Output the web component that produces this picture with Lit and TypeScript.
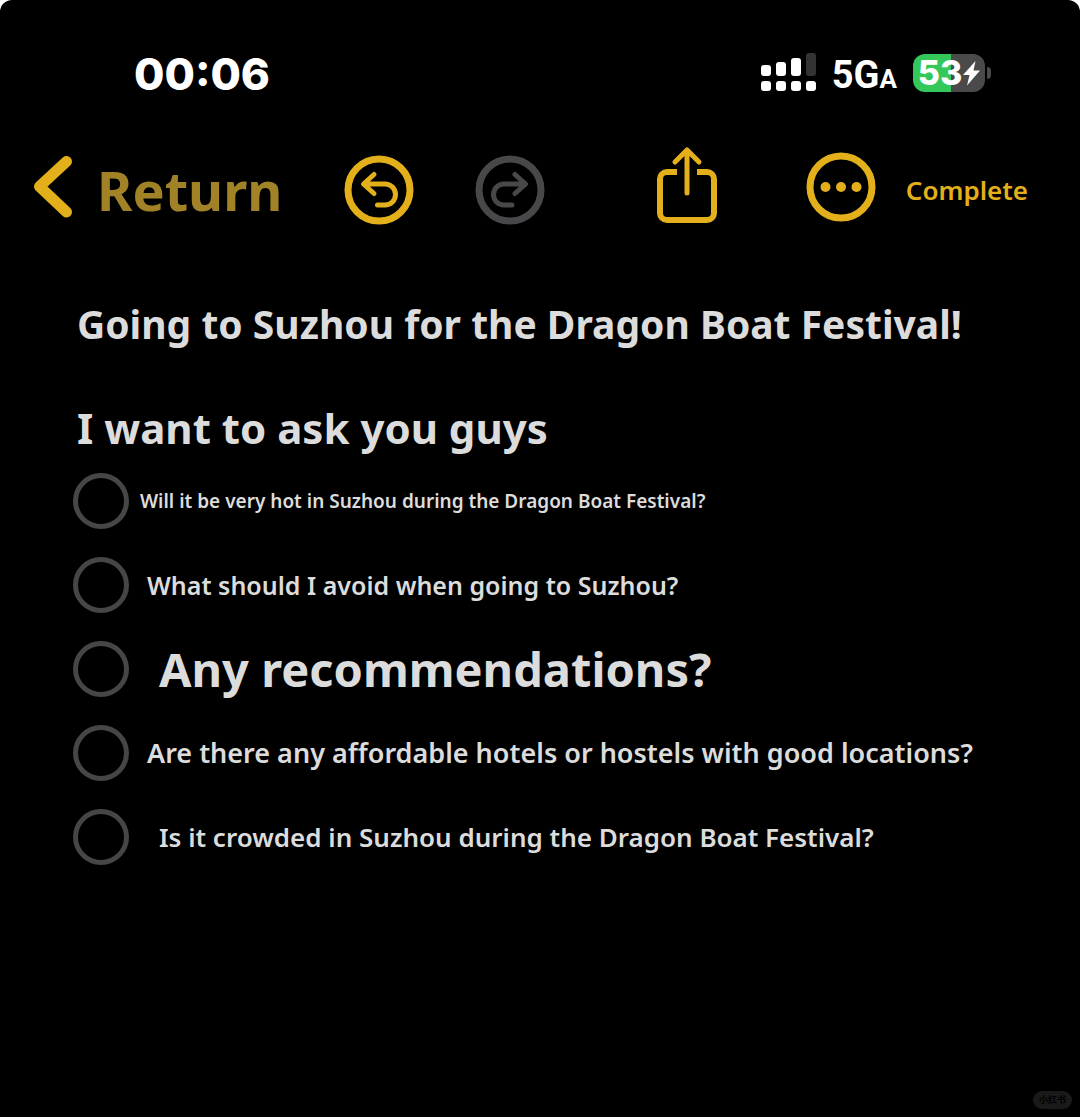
import { LitElement, html, css, svg } from "lit";
import { customElement, property } from "lit/decorators.js";
import { classMap } from "lit/directives/class-map.js";

interface Item {
  text: string;
  size: "xs" | "sm" | "md" | "ml" | "lg";
  inset: "near" | "mid" | "far";
}

const items: Item[] = [
  { text: "Will it be very hot in Suzhou during the Dragon Boat Festival?", size: "xs", inset: "near" },
  { text: "What should I avoid when going to Suzhou?", size: "sm", inset: "mid" },
  { text: "Any recommendations?", size: "lg", inset: "far" },
  { text: "Are there any affordable hotels or hostels with good locations?", size: "ml", inset: "mid" },
  { text: "Is it crowded in Suzhou during the Dragon Boat Festival?", size: "md", inset: "far" },
];

@customElement("status-bar")
export class StatusBar extends LitElement {
  static styles = css`
    :host {
      display: flex;
      align-items: center;
      justify-content: space-between;
      height: 48px;
      padding: 49px 89px 0 134px;
      color: #fff;
      font-family: Inter, "Liberation Sans", sans-serif;
    }
    .time {
      padding-top: 2px;
      font-size: 44px;
      line-height: 48px;
      font-weight: 800;
    }
    .indicators {
      display: flex;
      align-items: center;
    }
    .signal {
      display: block;
      width: 56px;
      height: 40px;
      margin-right: 16px;
    }
    .network {
      padding-top: 8px;
      font-family: Roboto, "Liberation Sans", sans-serif;
      font-size: 38px;
      line-height: 40px;
      font-weight: 700;
      margin-right: 16px;
    }
    .network small {
      font-size: 26px;
    }
    .battery {
      display: flex;
      align-items: center;
    }
    .cell {
      display: flex;
      align-items: center;
      justify-content: center;
      width: 72px;
      height: 38px;
      border-radius: 12px;
      background: linear-gradient(to right, #34c759 53%, #4a4a4a 53%);
      font-size: 34px;
      line-height: 38px;
      font-weight: 800;
    }
    .bolt {
      width: 18px;
      height: 26px;
    }
    .cap {
      width: 4px;
      height: 12px;
      margin-left: 2px;
      border-radius: 0 6px 6px 0;
      background: #4a4a4a;
    }
  `;

  render() {
    const bars = [0, 15, 30, 45];
    const heights = [11, 14, 18, 23];
    return html`
      <span class="time">00:06</span>
      <div class="indicators">
        <svg class="signal" viewBox="0 0 56 40" aria-hidden="true">
          ${bars.map(
            (x, i) => svg`
              <rect x=${x + 1} y=${23 - heights[i]} width="10" height=${heights[i]} rx="3" fill=${i === 3 ? "#333" : "#fff"}></rect>
              <rect x=${x + 1} y="28" width="10" height="10" rx="3" fill="#fff"></rect>`
          )}
        </svg>
        <span class="network">5G<small>A</small></span>
        <div class="battery">
          <span class="cell">53<svg class="bolt" viewBox="0 0 18 26" aria-hidden="true">
            <path d="M13.500 1 1 15h6.500L5 25.500 18 10.500h-6.500Z" fill="#fff"></path>
          </svg></span>
          <span class="cap"></span>
        </div>
      </div>
    `;
  }
}

@customElement("note-toolbar")
export class NoteToolbar extends LitElement {
  static styles = css`
    :host {
      display: flex;
      align-items: center;
      justify-content: space-between;
      height: 84px;
      padding: 51px 52px 0 32px;
      font-family: "Noto Sans", "Open Sans", sans-serif;
    }
    button {
      display: flex;
      align-items: center;
      padding: 0;
      border: 0;
      background: none;
      color: #e3b01b;
      font-family: inherit;
      font-weight: 600;
      cursor: pointer;
    }
    button:disabled {
      color: #48484a;
      cursor: default;
    }
    svg {
      display: block;
      fill: none;
      stroke: currentColor;
      stroke-linecap: round;
      stroke-linejoin: round;
    }
    .group {
      display: flex;
      align-items: center;
    }
    .back {
      gap: 23px;
      margin-right: 62px;
    }
    .back span {
      color: #a18227;
      font-size: 54px;
      line-height: 64px;
      font-weight: 700;
    }
    .undo {
      margin-right: 61px;
    }
    .share {
      margin-right: 88px;
      padding-bottom: 10px;
    }
    .more {
      margin-right: 30px;
      padding-bottom: 6px;
    }
    .done {
      font-size: 26px;
      line-height: 32px;
    }
  `;

  render() {
    return html`
      <div class="group">
        <button class="back">
          <svg width="42" height="72" viewBox="0 0 42 72" aria-hidden="true">
            <path d="M34.500 7.500 7.500 32.500 34.500 58" stroke-width="11"></path>
          </svg>
          <span>Return</span>
        </button>
        <button class="undo" aria-label="Undo">
          <svg width="70" height="70" viewBox="0 0 70 70" aria-hidden="true">
            <circle cx="35" cy="35" r="31" stroke-width="7"></circle>
            <path d="M30 19.500 19.500 29 30 38.500M20 29H41a10.500 10.500 0 0 1 0 21H33.500" stroke-width="5"></path>
          </svg>
        </button>
        <button class="redo" aria-label="Redo" disabled>
          <svg width="70" height="70" viewBox="0 0 70 70" aria-hidden="true">
            <circle cx="35" cy="35" r="31" stroke-width="7"></circle>
            <path d="M40 19.500 50.500 29 40 38.500M50 29H29a10.500 10.500 0 0 0 0 21H37" stroke-width="5"></path>
          </svg>
        </button>
      </div>
      <div class="group">
        <button class="share" aria-label="Share">
          <svg width="62" height="78" viewBox="0 0 62 78" aria-hidden="true">
            <path d="M21 26H11a7 7 0 0 0-7 7V67a7 7 0 0 0 7 7H51a7 7 0 0 0 7-7V33a7 7 0 0 0-7-7H41" stroke-width="6" stroke-linecap="butt"></path>
            <path d="M31 4V47M19 16 31 4 43 16" stroke-width="5"></path>
          </svg>
        </button>
        <button class="more" aria-label="More">
          <svg width="70" height="70" viewBox="0 0 70 70" aria-hidden="true">
            <circle cx="35" cy="35" r="31" stroke-width="7"></circle>
            <g fill="currentColor" stroke="none">
              <circle cx="19.500" cy="35" r="5"></circle>
              <circle cx="35" cy="35" r="5"></circle>
              <circle cx="50.500" cy="35" r="5"></circle>
            </g>
          </svg>
        </button>
        <button class="done">Complete</button>
      </div>
    `;
  }
}

@customElement("check-item")
export class CheckItem extends LitElement {
  @property({ attribute: false }) item!: Item;

  static styles = css`
    :host {
      display: block;
    }
    .row {
      display: flex;
      align-items: center;
      min-height: 56px;
      color: #dcdcdc;
      font-weight: 600;
      cursor: pointer;
    }
    .box {
      appearance: none;
      flex: none;
      width: 56px;
      height: 56px;
      margin: 0;
      border: 5px solid #464648;
      border-radius: 50%;
      cursor: pointer;
    }
    .box:checked {
      border-color: #e3b01b;
      background: radial-gradient(#e3b01b 60%, transparent 62%);
    }
    .near { gap: 11px; }
    .mid { gap: 18px; }
    .far { gap: 30px; }
    .xs { font-size: 19px; line-height: 24px; }
    .sm { font-size: 25px; line-height: 32px; }
    .md { font-size: 26px; line-height: 32px; }
    .ml { font-size: 27px; line-height: 32px; }
    .lg { font-size: 47px; line-height: 56px; font-weight: 700; }
  `;

  render() {
    const { text, size, inset } = this.item;
    return html`
      <label class=${classMap({ row: true, [size]: true, [inset]: true })}>
        <input class="box" type="checkbox" />
        <span>${text}</span>
      </label>
    `;
  }
}

@customElement("app-root")
export class AppRoot extends LitElement {
  static styles = css`
    :host {
      display: block;
      background: #fff;
      font-family: "Noto Sans", "Open Sans", sans-serif;
    }
    .screen {
      box-sizing: border-box;
      display: flex;
      flex-direction: column;
      min-height: 100vh;
      border-radius: 12px 12px 0 0;
      background: #000;
      color: #dcdcdc;
    }
    .note {
      flex: 1;
      padding: 64px 73px 0;
    }
    .title,
    .lead {
      margin: 0;
      padding-left: 4px;
      font-weight: 700;
    }
    .title {
      font-size: 39px;
      line-height: 56px;
    }
    .lead {
      margin-top: 48px;
      font-size: 42px;
      line-height: 56px;
    }
    .list {
      display: grid;
      gap: 28px;
      margin: 17px 0 0;
      padding: 0;
      list-style: none;
    }
    .foot {
      display: flex;
      justify-content: flex-end;
      padding: 8px;
    }
    .mark {
      padding: 0 6px;
      border-radius: 9px;
      background: #1a1a1a;
      color: #000;
      font: 700 9px/18px "Noto Sans CJK SC", sans-serif;
    }
  `;

  render() {
    return html`
      <main class="screen">
        <status-bar></status-bar>
        <note-toolbar></note-toolbar>
        <article class="note">
          <h1 class="title">Going to Suzhou for the Dragon Boat Festival!</h1>
          <h2 class="lead">I want to ask you guys</h2>
          <ul class="list">
            ${items.map((item) => html`<li><check-item .item=${item}></check-item></li>`)}
          </ul>
        </article>
        <footer class="foot"><span class="mark">小红书</span></footer>
      </main>
    `;
  }
}
